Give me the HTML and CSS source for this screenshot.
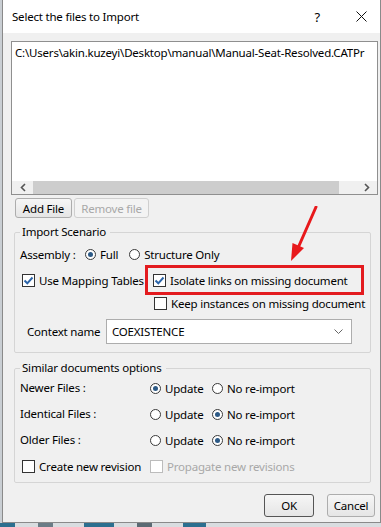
FILE: index.html
```html
<html>
    <head>
        <meta charset="utf-8">
        <title>Select the files to Import</title>
        <link rel="stylesheet" href="styles.css">
    </head>
    <body>
        <div class="desk">
            <div class="dialog">
                <div class="titlebar">
                    <span class="title">Select the files to Import</span>
                    <span class="help">?</span>
                    <svg class="close" width="11" height="11" viewBox="0 0 11 11"><path d="M0.5 0.5 L10.5 10.5 M10.5 0.5 L0.5 10.5" stroke="#111" stroke-width="1"/></svg>
                </div>
                <div class="content">
                    <div class="filelist">
                        <div class="path">C:\Users\akin.kuzeyi\Desktop\manual\Manual-Seat-Resolved.CATPr</div>
                        <div class="hscroll">
                            <svg class="arrow" width="8" height="9" viewBox="0 0 8 9"><path d="M6 1 L2.5 4.5 L6 8" fill="none" stroke="#555" stroke-width="1.6"/></svg>
                            <div class="track"><div class="thumb"></div></div>
                            <svg class="arrow" width="8" height="9" viewBox="0 0 8 9"><path d="M2 1 L5.5 4.5 L2 8" fill="none" stroke="#555" stroke-width="1.6"/></svg>
                        </div>
                    </div>

                    <div class="filebtns">
                        <button class="btn add" type="button">Add File</button>
                        <button class="btn remove" type="button" disabled>Remove file</button>
                    </div>

                    <fieldset class="group scenario">
                        <legend>Import Scenario</legend>
                        <div class="row assembly">
                            <span class="label">Assembly :</span>
                            <span class="opt"><span class="radio on"></span>Full</span>
                            <span class="opt"><span class="radio"></span>Structure Only</span>
                        </div>
                        <div class="options">
                            <span class="opt mapping"><span class="cb"><svg width="11" height="11" viewBox="0 0 11 11"><path d="M1.5 5.5 L4.3 8.3 L9.5 2.5" fill="none" stroke="#2b64a8" stroke-width="2"/></svg></span>Use Mapping Tables</span>
                            <span class="highlight"><span class="opt"><span class="cb"><svg width="11" height="11" viewBox="0 0 11 11"><path d="M1.5 5.5 L4.3 8.3 L9.5 2.5" fill="none" stroke="#2b64a8" stroke-width="2"/></svg></span>Isolate links on missing document</span></span>
                            <span></span>
                            <span class="opt keep"><span class="cb"></span>Keep instances on missing document</span>
                        </div>
                        <div class="row context">
                            <span class="label">Context name</span>
                            <div class="combo">
                                <span>COEXISTENCE</span>
                                <svg width="9" height="6" viewBox="0 0 9 6"><path d="M0.5 0.5 L4.5 4.5 L8.5 0.5" fill="none" stroke="#666" stroke-width="1"/></svg>
                            </div>
                        </div>
                    </fieldset>

                    <fieldset class="group similar">
                        <legend>Similar documents options</legend>
                        <div class="grid">
                            <span class="label">Newer Files :</span>
                            <span class="opt"><span class="radio on"></span>Update</span>
                            <span class="opt"><span class="radio"></span>No re-import</span>

                            <span class="label">Identical Files :</span>
                            <span class="opt"><span class="radio"></span>Update</span>
                            <span class="opt"><span class="radio on"></span>No re-import</span>

                            <span class="label">Older Files :</span>
                            <span class="opt"><span class="radio"></span>Update</span>
                            <span class="opt"><span class="radio on"></span>No re-import</span>

                            <span class="opt revision"><span class="cb"></span>Create new revision</span>
                            <span class="opt disabled propagate"><span class="cb"></span>Propagate new revisions</span>
                        </div>
                    </fieldset>

                    <div class="footer">
                        <button class="btn ok" type="button">OK</button>
                        <button class="btn cancel" type="button">Cancel</button>
                    </div>
                </div>

                <!-- annotation arrow drawn over the dialog -->
                <svg class="pointer" width="40" height="64" viewBox="0 0 40 64">
                    <path d="M34 1 L16 42" stroke="#e8191c" stroke-width="3" stroke-linecap="round"/>
                    <path d="M9 55 L10.5 37 L22 42 Z" fill="#e8191c"/>
                </svg>
            </div>
            <div class="cad"></div>
        </div>
    </body>
</html>
```

FILE: styles.css
```css
body {
    margin: 0;
    background-color: #c9ced3;
    font-family: "Noto Sans", "Open Sans", sans-serif;
    font-size: 11.5px;
    letter-spacing: -0.2px;
    color: #000;
}
.desk {
    width: 381px;
    height: 527px;
    padding-left: 2px;
    box-sizing: border-box;
    overflow: hidden;
}
.dialog {
    position: relative;
    width: 379px;
    height: 523px;
    box-sizing: border-box;
    border: 1px solid #8a8a8a;
    border-top: none;
    background-color: #f0f0f0;
}
.cad {
    height: 4px;
    margin-left: -2px;
    background: linear-gradient(90deg, #2c6f8f 0 4%, #d9dde0 4% 10%, #6b7c86 10% 14%, #d9dde0 14% 22%, #2c6f8f 22% 30%, #d9dde0 30% 36%, #5b6a73 36% 40%, #d9dde0 40% 48%, #2c6f8f 48% 54%, #d9dde0 54%);
}
.titlebar {
    height: 33px;
    display: flex;
    align-items: center;
    background-color: #fff;
    padding-left: 9px;
    padding-right: 13px;
}
.title {
    flex: 1;
    font-size: 11.5px;
}
.help {
    font-size: 13px;
    margin-right: 36px;
}
.content {
    padding: 8px 2px 0 8px;
}
.filelist {
    height: 154px;
    box-sizing: border-box;
    border: 1px solid #8f8f8f;
    background-color: #fff;
    display: flex;
    flex-direction: column;
    overflow: hidden;
}
.path {
    flex: 1;
    padding: 2px 0 0 3px;
    white-space: nowrap;
    line-height: 17px;
}
.hscroll {
    height: 13px;
    display: flex;
    align-items: center;
    background-color: #f0f0f0;
}
.hscroll .arrow {
    margin: 0 6px 0 7px;
}
.track {
    flex: 1;
    height: 13px;
}
.thumb {
    width: 306px;
    height: 13px;
    background-color: #cdcdcd;
}
.btn {
    font-family: "Noto Sans", "Open Sans", sans-serif;
    font-size: 11.5px;
    letter-spacing: -0.2px;
    color: #000;
    background: linear-gradient(#f6f6f6, #e5e5e5);
    border: 1px solid #adadad;
    border-radius: 3px;
    padding: 0;
    height: 20px;
}
.btn:disabled {
    color: #a8a8a8;
    border-color: #cfcfcf;
    background: #f3f3f3;
}
.filebtns {
    display: flex;
    gap: 2px;
    margin: 3px 0 0 4px;
}
.add { width: 57px; }
.remove { width: 75px; }
.group {
    margin: 6px 7px 0 3px;
    border: 1px solid #d5d5d5;
    border-radius: 2px;
    padding: 6px 0 8px 5px;
}
.group legend {
    padding: 0 4px 0 2px;
    margin-left: 0;
    line-height: 16px;
}
.row {
    display: flex;
    align-items: center;
    height: 16px;
}
.opt {
    display: inline-flex;
    align-items: center;
    gap: 4px;
    white-space: nowrap;
}
.label {
    white-space: nowrap;
}
.radio {
    width: 11px;
    height: 11px;
    box-sizing: border-box;
    border: 1px solid #3a3a3a;
    border-radius: 50%;
    background-color: #fff;
    display: inline-flex;
    align-items: center;
    justify-content: center;
}
.radio.on::after {
    content: "";
    width: 5px;
    height: 5px;
    border-radius: 50%;
    background-color: #2d5a86;
}
.cb {
    width: 13px;
    height: 13px;
    box-sizing: border-box;
    border: 1px solid #333;
    background-color: #fff;
    display: inline-flex;
    align-items: center;
    justify-content: center;
}
.disabled {
    color: #a8a8a8;
}
.disabled .cb {
    border-color: #bcbcbc;
}
.assembly .label {
    width: 65px;
}
.assembly .opt + .opt {
    margin-left: 11px;
}
.options {
    display: grid;
    grid-template-columns: 125px auto;
    align-items: center;
    margin-top: 3px;
}
.mapping {
    margin-left: 2px;
}
.highlight {
    border: 3px solid #e31b1f;
    height: 30px;
    box-sizing: border-box;
    display: flex;
    align-items: center;
    padding-left: 5px;
    width: 219px;
}
.keep {
    margin-left: 9px;
    height: 16px;
}
.context {
    height: 25px;
    margin-top: 8px;
}
.context .label {
    margin-left: 7px;
    width: 79px;
}
.combo {
    width: 246px;
    height: 25px;
    box-sizing: border-box;
    border: 1px solid #adadad;
    background-color: #fff;
    display: flex;
    align-items: center;
    justify-content: space-between;
    padding: 0 8px 0 5px;
}
.similar {
    margin-top: 7px;
    padding-top: 4px;
    padding-bottom: 8px;
}
.grid {
    display: grid;
    grid-template-columns: 130px 62px auto;
    row-gap: 10px;
    align-items: center;
}
.grid .label,
.grid .opt {
    height: 16px;
}
.revision {
    margin-left: 2px;
}
.propagate {
    grid-column: 2 / 4;
}
.footer {
    display: flex;
    justify-content: flex-end;
    gap: 13px;
    margin: 11px 3px 0 0;
}
.ok {
    width: 50px;
    height: 23px;
    border-color: #555;
}
.cancel {
    width: 48px;
    height: 23px;
}
.pointer {
    position: absolute;
    left: 279px;
    top: 206px;
}
```
